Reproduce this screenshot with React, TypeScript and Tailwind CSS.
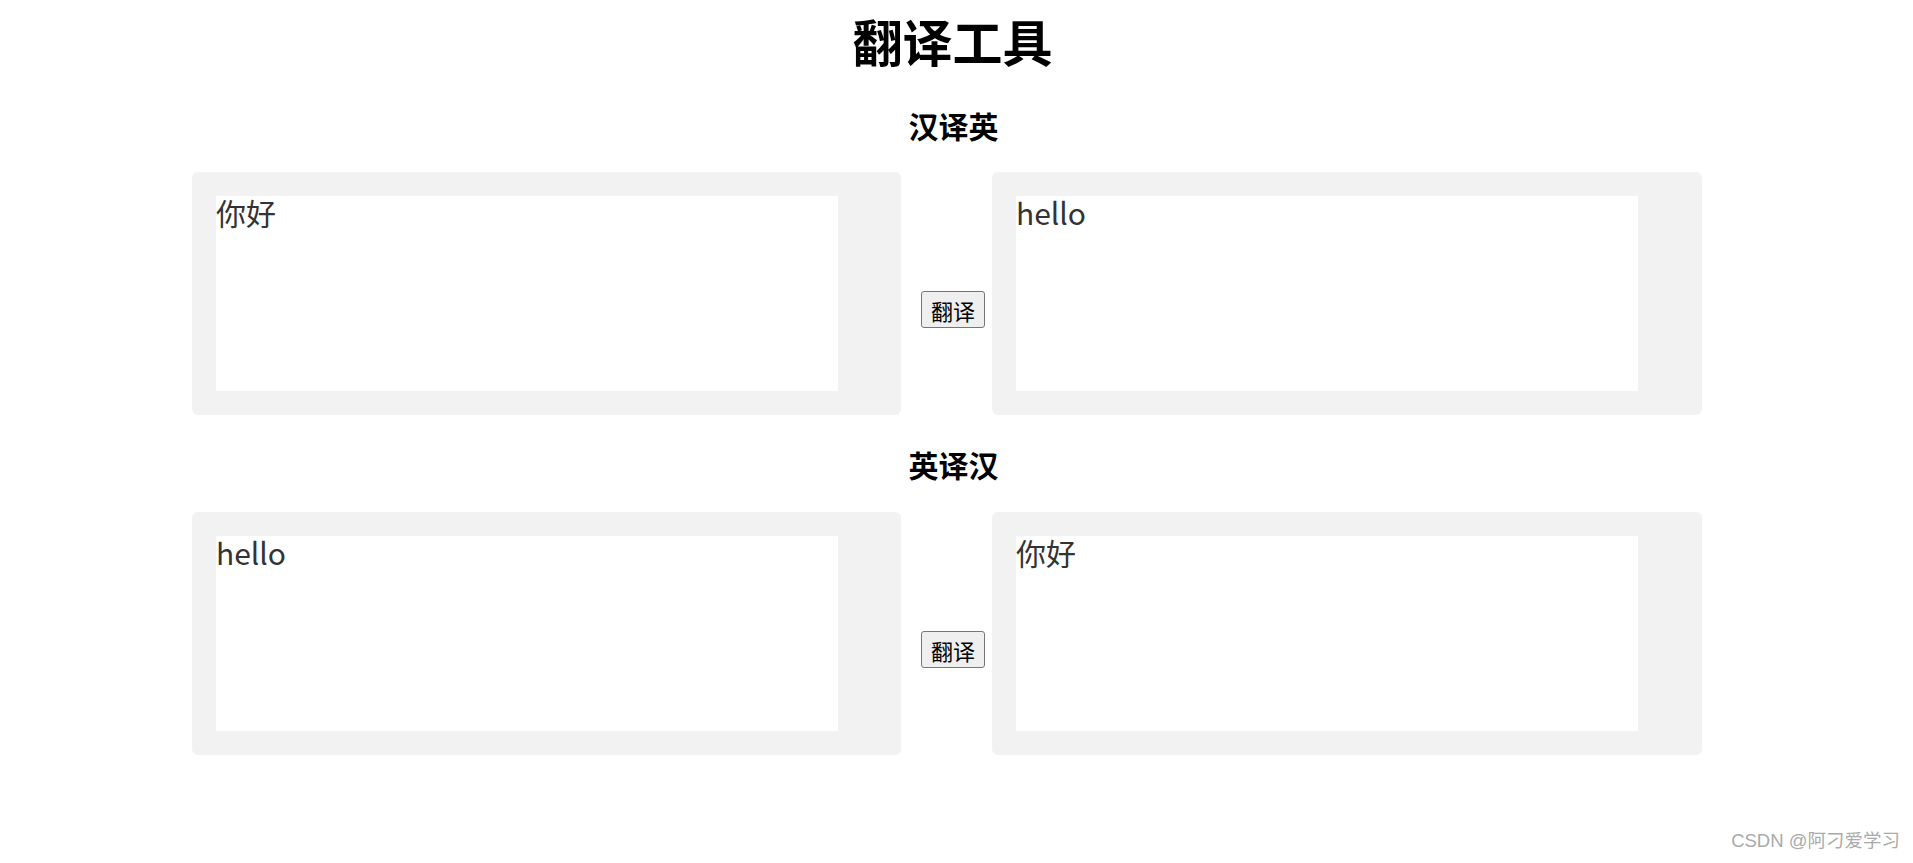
import React from "react";

const font = { fontFamily: '"Noto Sans CJK SC", "Noto Sans", sans-serif' };

function Row({ left, right }: { left: string; right: string }) {
  return (
    <div className="flex items-start pl-[192px]">
      <div className="w-[709px] h-[243px] bg-[#f2f2f2] rounded-[6px] pt-[24px] pl-[24px]">
        <textarea
          defaultValue={left}
          className="block w-[622px] h-[195px] bg-white resize-none outline-none text-[30px] leading-[32px] text-[#333] font-['Noto_Sans_CJK_SC',sans-serif]"
        />
      </div>
      <button className="mt-[119px] ml-[20px] mr-[7px] w-[64px] h-[37px] bg-[#efefef] border border-[#767676] rounded-[3px] text-[22px] leading-[26px] text-black font-['Noto_Sans_CJK_SC',sans-serif]">
        翻译
      </button>
      <div className="w-[710px] h-[243px] bg-[#f2f2f2] rounded-[6px] pt-[24px] pl-[24px]">
        <textarea
          defaultValue={right}
          className="block w-[622px] h-[195px] bg-white resize-none outline-none text-[30px] leading-[32px] text-[#333] font-['Noto_Sans_CJK_SC',sans-serif]"
        />
      </div>
    </div>
  );
}

export default function App() {
  return (
    <div className="relative w-[1913px] h-[863px] bg-white overflow-hidden" style={font}>
      <h1 className="text-center text-[50px] leading-[62px] font-bold text-black pt-[9px] pr-[8px]">翻译工具</h1>
      <h2 className="text-center text-[30px] leading-[36px] font-bold text-black mt-[36px] pr-[6px]">汉译英</h2>
      <div className="mt-[29px]">
        <Row left="你好" right="hello" />
      </div>
      <h2 className="text-center text-[30px] leading-[36px] font-bold text-black mt-[31px] pr-[6px]">英译汉</h2>
      <div className="mt-[30px]">
        <Row left="hello" right="你好" />
      </div>
      <div className="absolute right-[13px] bottom-[8px] text-[18.5px] text-[#aaaaaa] font-['Liberation_Sans','Noto_Sans_CJK_SC',sans-serif]">
        CSDN @阿刁爱学习
      </div>
    </div>
  );
}
